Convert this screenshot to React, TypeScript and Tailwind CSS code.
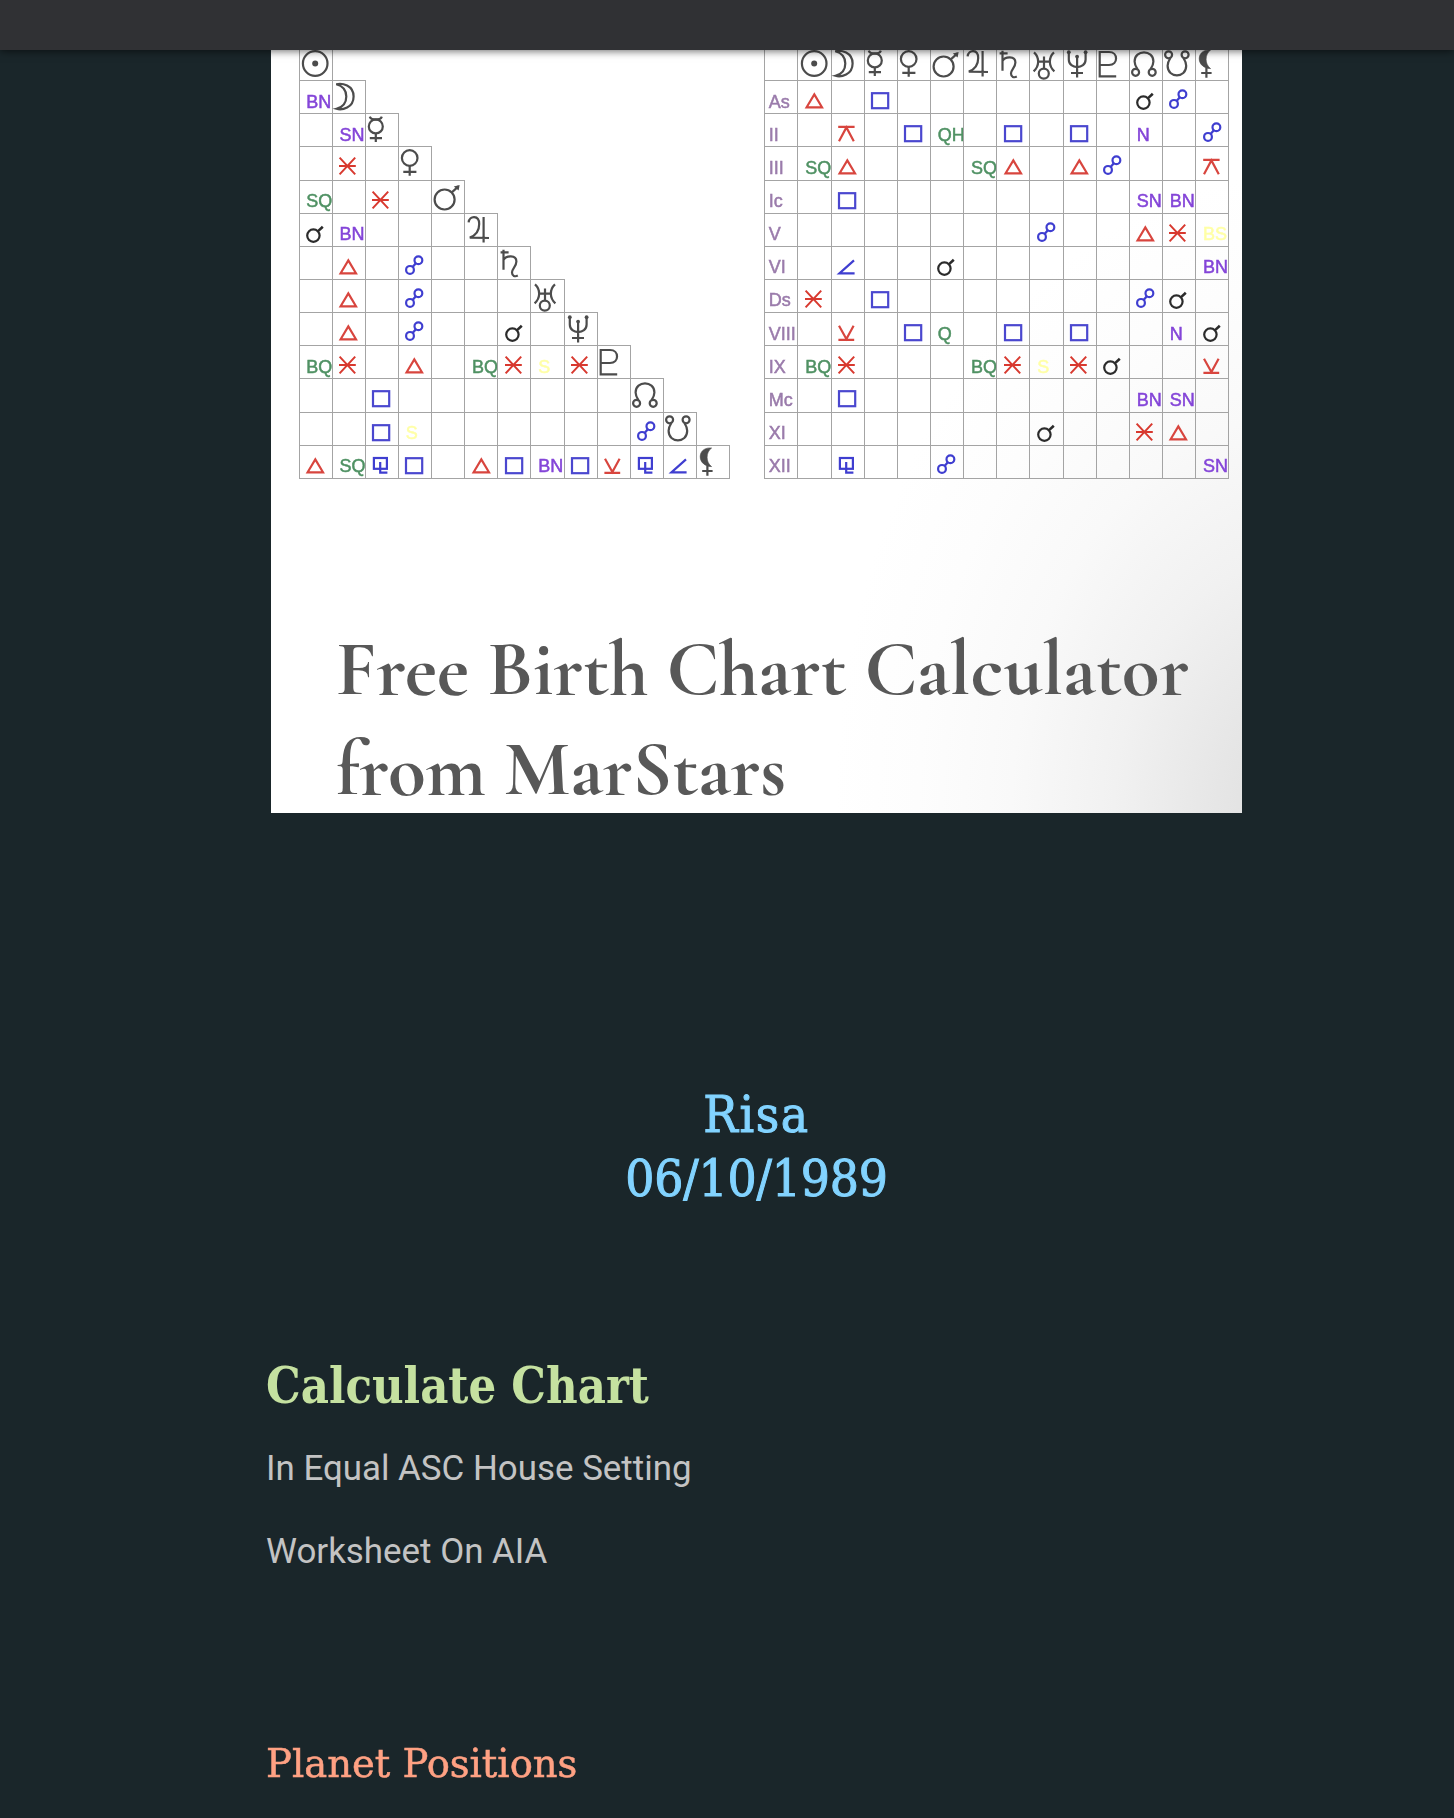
import React from 'react';
import clsx from 'clsx';

const bodies = [
  'sun', 'moon', 'mercury', 'venus', 'mars', 'jupiter', 'saturn',
  'uranus', 'neptune', 'pluto', 'north', 'south', 'lilith',
];

const houses = ['As', 'II', 'III', 'Ic', 'V', 'VI', 'Ds', 'VIII', 'IX', 'Mc', 'XI', 'XII'];

// "." is an empty cell, words are glyphs, capitals are printed as text
const planetAspects = [
  '',
  'BN',
  '. SN',
  '. sextile .',
  'SQ . sextile .',
  'conj BN . . .',
  '. trine . opp . .',
  '. trine . opp . . .',
  '. trine . opp . . conj .',
  'BQ sextile . trine . BQ sextile S sextile',
  '. . square . . . . . . .',
  '. . square S . . . . . . opp',
  'trine SQ sesqui square . trine square BN square semisextile sesqui semisquare',
];

const houseAspects = [
  'trine . square . . . . . . . conj opp .',
  '. quincunx . square QH . square . square . N . opp',
  'SQ trine . . . SQ trine . trine opp . . quincunx',
  '. square . . . . . . . . SN BN .',
  '. . . . . . . opp . . trine sextile BS',
  '. semisquare . . conj . . . . . . . BN',
  'sextile . square . . . . . . . opp conj .',
  '. semisextile . square Q . square . square . . N conj',
  'BQ sextile . . . BQ sextile S sextile conj . . semisextile',
  '. square . . . . . . . . BN SN .',
  '. . . . . . . conj . . sextile trine .',
  '. sesqui . . opp . . . . . . . SN',
];

const textColors: Record<string, string> = {
  BN: 'text-[#8445d8]',
  SN: 'text-[#8445d8]',
  N: 'text-[#8445d8]',
  SQ: 'text-[#4f9163]',
  BQ: 'text-[#4f9163]',
  QH: 'text-[#4f9163]',
  Q: 'text-[#4f9163]',
  S: 'text-[#ffffa6]',
  BS: 'text-[#ffffa6]',
};

const glyphColors: Record<string, string> = {
  sextile: 'text-[#d8392f]',
  trine: 'text-[#d8453e]',
  quincunx: 'text-[#d8453e]',
  semisextile: 'text-[#d8453e]',
  square: 'text-[#4a47cf]',
  opp: 'text-[#3f3ed0]',
  sesqui: 'text-[#3f3ed0]',
  semisquare: 'text-[#3f3ed0]',
  conj: 'text-[#2b2b2b]',
};

const glyphs: Record<string, React.ReactNode> = {
  sun: (
    <>
      <circle cx="16.2" cy="15.5" r="12.3" />
      <circle cx="16.2" cy="15.5" r="3" fill="currentColor" stroke="none" />
    </>
  ),
  moon: (
    <path d="M4.3 3.2C10 1.8 21.6 4 21.6 15.4S10 29.4 4.5 27.8C11 26 14.3 21 14.3 15.4S11 5 4.3 3.2Z" />
  ),
  mercury: (
    <>
      <circle cx="10.8" cy="12.4" r="7" />
      <path d="M4.8 2.6C6 6.6 15.6 6.6 16.8 2.6M10.8 19.4V28M4.8 24.2H17" />
    </>
  ),
  venus: (
    <>
      <circle cx="11.7" cy="11" r="7.8" />
      <path d="M11.7 18.8V28.7M5.3 24.8H18.4" />
    </>
  ),
  mars: (
    <>
      <circle cx="13.6" cy="18.5" r="10" />
      <path d="M20.8 11.4L27.6 5.2" />
      <path d="M22.8 5.4L28.6 4L27.6 9.6Z" fill="currentColor" stroke="none" />
    </>
  ),
  jupiter: (
    <path d="M3.6 8.4C4.4 1.4 14.2 .8 14.2 10C14.2 17 10.5 21.5 4.8 23.6L24 24M18.6 3V28.6" />
  ),
  saturn: (
    <path d="M5.5 2.8V22.8M2.6 5.4H10.6M5.5 13C8 8.4 18.4 7.6 18.4 14.5C18.4 19.5 14 21.4 14 25.5C14 29 17 30 19.8 28.6" />
  ),
  uranus: (
    <>
      <path d="M4 4.4C9.6 9.5 9.6 18 3.6 23.4M24 4.4C18.4 9.5 18.4 18 24.4 23.4M14 8.6V20.4M8.3 13.6H19.7" />
      <circle cx="13.8" cy="25.6" r="5" />
    </>
  ),
  neptune: (
    <>
      <path d="M5.8 5V11.4C5.8 21.6 22.6 21.6 22.6 11.4V5M14.1 9V29.4M8 25H20" />
      <circle cx="5.8" cy="4.2" r="1.9" fill="currentColor" stroke="none" />
      <circle cx="22.6" cy="4.2" r="1.9" fill="currentColor" stroke="none" />
      <circle cx="14.1" cy="8.6" r="1.9" fill="currentColor" stroke="none" />
    </>
  ),
  pluto: <path d="M20.2 28.3H3.7V4H13C22.4 4 22.4 17 13 17H3.7" />,
  north: (
    <>
      <path d="M8.4 21.2C6.4 18 5.6 16 5.6 13.4C5.6 1.4 24.4 1.4 24.4 13.4C24.4 16 23.6 18 21.6 21.2" />
      <circle cx="6.6" cy="24.3" r="3.5" />
      <circle cx="23.2" cy="24.3" r="3.5" />
    </>
  ),
  south: (
    <>
      <path d="M8.4 10C6.4 13 5.6 15.2 5.6 17.8C5.6 30.6 24.2 30.6 24.2 17.8C24.2 15.2 23.4 13 21.4 10" />
      <circle cx="6.6" cy="6.8" r="3.5" />
      <circle cx="23.1" cy="6.8" r="3.5" />
    </>
  ),
  lilith: (
    <>
      <path d="M14.6 2C-.6 .6 -.6 20.2 14.6 20.6C8.6 16.4 8.6 6.2 14.6 2Z" fill="currentColor" strokeWidth="0.6" />
      <path d="M10.4 19.5V29.7M5.2 25H15.6" />
    </>
  ),
  sextile: <path d="M7.6 10.6L23.2 27.4M23.2 10.6L7.6 27.4M7 19H23.8" strokeWidth="2" />,
  trine: <path d="M16.3 13.4L24 26.3H8.6Z" />,
  opp: (
    <>
      <circle cx="12" cy="22.9" r="3.9" />
      <circle cx="20.4" cy="13.3" r="3.9" />
      <path d="M14.6 20L17.8 16.2" />
    </>
  ),
  conj: (
    <>
      <circle cx="14.4" cy="21.6" r="6.2" />
      <path d="M18.8 17.4L23.8 12.8" strokeWidth="2.6" />
    </>
  ),
  square: <rect x="8" y="12.2" width="16.2" height="15" />,
  sesqui: (
    <>
      <rect x="8.9" y="12" width="13" height="10.8" />
      <path d="M15.2 16V26.6H22.4" />
    </>
  ),
  semisquare: <path d="M23 13.4L8.4 26.4H23.6" />,
  semisextile: <path d="M8 12.8L15.4 26L22.6 12.8M7.4 26.8H23.2" />,
  quincunx: <path d="M8 27.2L15.4 13.4L22.8 27.2M7.2 12.9H23.6" />,
};

const Glyph: React.FC<{ name: string }> = ({ name }) => (
  <svg
    viewBox="0 0 33 33"
    className={clsx('-ml-[0.6px] block h-[33px] w-[33px] shrink-0 overflow-visible', glyphColors[name] ?? 'text-[#4c4c4c]')}
    fill="none"
    stroke="currentColor"
    strokeWidth="2.2"
  >
    {glyphs[name]}
  </svg>
);

interface CellProps {
  value: string;
  isLast?: boolean;
  isBottom?: boolean;
}

const Cell: React.FC<CellProps> = ({ value, isLast, isBottom }) => (
  <div className="h-[33.15px] w-[33.15px] shrink-0">
    <div
      className={clsx(
        'h-[34.15px] w-[34.15px] border-t border-l border-[#a4a4a4]',
        isLast && 'border-r',
        isBottom && 'border-b',
      )}
    >
      {glyphs[value] ? (
        <Glyph name={value} />
      ) : houses.includes(value) ? (
        <p className="pt-[10.5px] pl-[3.5px] text-[18px] leading-[20px] text-[#9a7bab]">{value}</p>
      ) : (
        value !== '.' && (
          <p className={clsx('pt-[10.5px] pl-[6.8px] text-[18px] leading-[20px]', textColors[value])}>{value}</p>
        )
      )}
    </div>
  </div>
);

const AspectRow: React.FC<{ cells: string[]; isBottom?: boolean }> = ({ cells, isBottom }) => (
  <div className="flex">
    {cells.map((value, i) => (
      <Cell key={i} value={value} isLast={i === cells.length - 1} isBottom={isBottom} />
    ))}
  </div>
);

const ChartPreview = () => (
  <div className="ml-[270.5px] h-[763px] w-[971.5px] overflow-hidden bg-white bg-[radial-gradient(ellipse_48%_84%_at_106%_100%,#dedede_0%,#e6e6e6_18%,#f1f1f1_40%,#f9f9f9_62%,#fdfdfd_82%,#ffffff_100%)]">
    <div className="-mt-[3px] flex gap-[34.8px] pl-[28px] font-['Liberation_Sans',Arial,sans-serif] blur-[0.7px] [-webkit-text-stroke:0.5px]">
      <div className="w-[431px]">
        {planetAspects.map((row, i) => (
          <AspectRow
            key={i}
            cells={[...row.split(' ').filter(Boolean), bodies[i]]}
            isBottom={i === planetAspects.length - 1}
          />
        ))}
      </div>
      <div>
        <AspectRow cells={['.', ...bodies]} />
        {houseAspects.map((row, i) => (
          <AspectRow
            key={i}
            cells={[houses[i], ...row.split(' ')]}
            isBottom={i === houseAspects.length - 1}
          />
        ))}
      </div>
    </div>
    <h1 className="mt-[141px] ml-[65.5px] font-['Cormorant_Garamond','Liberation_Serif',serif] text-[77.4px] leading-[100px] font-bold whitespace-nowrap text-[#585858] blur-[0.7px]">
      Free Birth Chart Calculator
      <br />
      from MarStars
    </h1>
  </div>
);

export default function App() {
  return (
    <div className="h-[1818px] overflow-hidden bg-[#1a262a] font-[Roboto,sans-serif]">
      <header className="relative z-10 h-[50px] bg-[#303134] shadow-[0_1px_8px_rgba(0,0,0,0.6)]" />
      <ChartPreview />

      <main className="px-[266px]">
        <div className="-ml-[20px] w-[1021px] pt-[270px] text-center font-['Roboto_Slab','DejaVu_Serif_Condensed','DejaVu_Serif',serif] text-[51px] leading-[64px] text-[#82d3ff] [-webkit-text-stroke:1px]">
          <p className="tracking-[1.6px]">Risa</p>
          <p className="tracking-[-0.2px]">06/10/1989</p>
        </div>

        <h2 className="mt-[142px] origin-left scale-x-[0.949] font-['Roboto_Slab','DejaVu_Serif_Condensed','DejaVu_Serif',serif] text-[51px] leading-[64px] font-bold whitespace-nowrap text-[#c5e1a0]">
          Calculate Chart
        </h2>
        <p className="mt-[28px] text-[34.9px] leading-[48px] text-[#c3c3c3]">In Equal ASC House Setting</p>
        <p className="mt-[35px] text-[34.9px] leading-[48px] text-[#c3c3c3]">Worksheet On AIA</p>

        <h3 className="mt-[161px] origin-left scale-x-[1.07] font-['Roboto_Slab','DejaVu_Serif_Condensed','DejaVu_Serif',serif] text-[40px] leading-[52px] whitespace-nowrap text-[#ffa183] [-webkit-text-stroke:0.5px]">
          Planet Positions
        </h3>
      </main>
    </div>
  );
}
